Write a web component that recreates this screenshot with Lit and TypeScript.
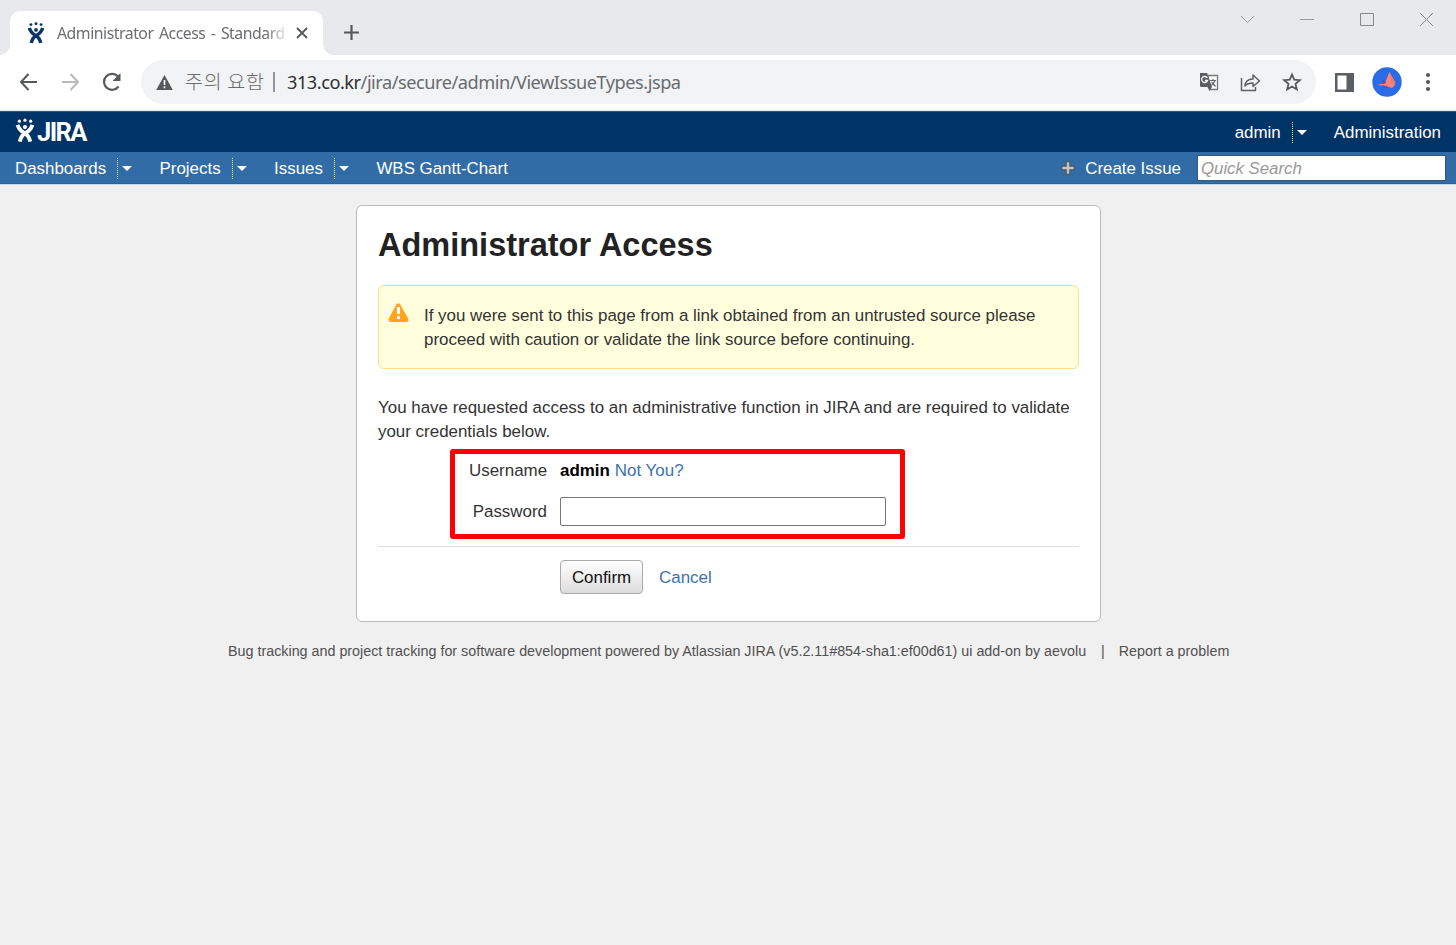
import { LitElement, html, css } from "lit";
import { customElement } from "lit/decorators.js";

const person = html`<svg class="person" viewBox="0 0 18 22" fill="currentColor">
  <circle cx="3.900" cy="2.600" r="1.450"/><circle cx="9" cy="1.700" r="1.450"/><circle cx="14.100" cy="2.600" r="1.450"/>
  <circle cx="9" cy="7.900" r="1.900"/>
  <path d="M2.300 6C3.600 9.800 6 12.200 9 13.700c2.800 1.500 4 4 4.700 7.300M15.700 6C14.400 9.800 12 12.200 9 13.700 6.200 15.200 5 17.700 4.300 21" fill="none" stroke="currentColor" stroke-width="3.500"/>
</svg>`;

@customElement("app-root")
export class AppRoot extends LitElement {
  static styles = css`
    :host { display: block; width: 1456px; height: 945px; overflow: hidden; background: #f0f0f0; font: 16.93px/24px "Liberation Sans", Arial, sans-serif; color: #333; }
    * { box-sizing: border-box; }
    svg { display: block; flex: none; }
    .strip { height: 55px; background: #e8e9ed; display: flex; align-items: flex-end; }
    .corner { width: 10px; height: 10px; background: radial-gradient(circle at 0 0, #e8e9ed 9.5px, #fff 10px); }
    .corner-end { background: radial-gradient(circle at 100% 0, #e8e9ed 9.5px, #fff 10px); }
    .tab { width: 313px; height: 44px; background: #fff; border-radius: 10px 10px 0 0; display: flex; align-items: center; padding-left: 17px; }
    .tab .person { width: 18px; height: 22px; color: #0b3467; }
    .title { width: 230px; margin-left: 12px; white-space: nowrap; font: 15.8px/24px "Noto Sans", sans-serif; letter-spacing: -.47px; word-spacing: 1.8px; color: #6b6d70; -webkit-mask-image: linear-gradient(90deg, #000 208px, transparent 233px); mask-image: linear-gradient(90deg, #000 208px, transparent 233px); }
    .close { margin-left: 9px; }
    .plus { margin: 0 0 14px 10px; }
    .window { margin-left: auto; height: 55px; display: flex; gap: 44px; padding: 11px 21px 0 0; }
    .toolbar { height: 56px; background: #fff; display: flex; align-items: center; padding: 0 0 1px 18px; border-bottom: 1px solid #e2e2e2; }
    .reload { margin-left: 20px; }
    .fwd { margin-left: 20px; }
    .omni { margin-left: 18px; width: 1175px; height: 44px; border-radius: 22px; background: #f1f3f4; display: flex; align-items: center; padding: 0 14px 0 15px; color: #696b6f; font: 18.2px/26px "Noto Sans", sans-serif; white-space: nowrap; }
    .caution { width: 80px; margin: -2px 0 0 12px; font: 300 19.5px/26px "Noto Sans CJK KR", sans-serif; letter-spacing: .7px; }
    .bar { width: 2px; height: 20px; background: #929497; margin: 0 12px 0 8px; }
    .url { letter-spacing: -.48px; }
    .host { color: #2d2e31; }
    .actions { display: flex; gap: 21px; margin-left: auto; }
    .panel { margin-left: 19px; }
    .avatar { margin-left: 18px; }
    .dots { margin-left: 23px; }
    .header { height: 41px; background: #036; border-top: 1px solid #345778; color: #fff; display: flex; align-items: center; padding: 1px 15px 0; }
    .logo { display: flex; align-items: center; margin-top: -4px; }
    .logo .person { width: 20px; height: 27px; }
    .wordmark { width: 51px; margin-left: 2px; font: bold 25.5px/28px Roboto, sans-serif; letter-spacing: -1.6px; padding-top: 3px; }
    .split { display: flex; align-items: center; }
    .split::after { content: ""; border: 5px solid transparent; border-top-color: #fff; border-bottom: 0; margin-left: 4px; }
    .sep { height: 21px; border-left: 1px dotted #dfe8f1; margin-left: 11px; }
    .header .split { margin-left: auto; }
    .admin { margin-left: 27px; }
    .nav { height: 32px; background: #326ca6; border-bottom: 1px solid #2560a0; color: #fff; display: flex; align-items: center; padding: 2px 10px 0 15px; white-space: nowrap; font-size: 16.9px; }
    .nav .split { margin-right: 27.5px; }
    .create { display: flex; align-items: center; gap: 10px; margin-left: auto; }
    .create svg { margin-top: -2px; }
    .search { width: 249px; height: 26px; margin: -1px 0 0 16px; border: 1px solid #36587b; background: #fff; color: #999; font-size: 16.8px; font-style: italic; line-height: 25px; padding-left: 3px; }
    .light { height: 1px; background: #c7d8e8; }
    .card { width: 745px; height: 417px; margin: 20px auto 0 356px; background: #fff; border: 1px solid #bbb; border-radius: 6px; padding: 20px 21px 0; }
    h1 { margin: 0; font: bold 32.5px/39px "Liberation Sans", sans-serif; color: #222; white-space: nowrap; }
    .warn { height: 84px; margin-top: 20px; border: 1px solid #fbdd8c; border-radius: 6px; background: #ffffdd; padding: 18px 0 0 10px; display: flex; white-space: nowrap; }
    .warn svg { margin: -1px 15px 0 -1px; }
    .para { margin-top: 27px; white-space: nowrap; }
    .mark { width: 455px; height: 90px; margin: 5px 0 0 72px; border: 5px solid #f00; border-radius: 3px; padding: 5px 0 0 14px; }
    .row { display: grid; grid-template-columns: 78px auto; column-gap: 13px; align-items: center; }
    .label { text-align: right; }
    .user { color: #000; }
    .user b { margin-right: 5px; }
    .pw { margin-top: 14px; }
    .input { width: 326px; height: 29px; border: 1px solid #767676; border-radius: 2px; background: #fff; }
    .link { color: #3b73af; }
    .rule { height: 1px; background: #ddd; margin-top: 7px; }
    .buttons { display: flex; align-items: center; margin: 13px 0 0 182px; }
    .buttons .link { padding-top: 2px; }
    .confirm { width: 83px; height: 34px; border: 1px solid #aaa; border-radius: 4px; background: linear-gradient(#fff, #ddd); color: #111; text-align: center; line-height: 33px; margin-right: 16px; }
    .footer { margin: 17px 0 0 228px; display: flex; font-size: 14.32px; color: #505050; white-space: nowrap; }
    .powered { width: 859px; }
    .pipe { margin: 0 14px; }
  `;
  menu(label: string) {
    return html`<div class="split"><span>${label}</span><span class="sep"></span></div>`;
  }
  render() {
    return html`
    <div class="strip"><i class="corner"></i>
      <div class="tab">${person}<div class="title">Administrator Access - Standard</div>
        <svg class="close" width="12" height="12" viewBox="0 0 12 12" stroke="#55585c" stroke-width="1.800"><path d="m1 1 10 10M11 1 1 11"/></svg></div>
      <i class="corner corner-end"></i>
      <svg class="plus" width="17" height="17" viewBox="0 0 17 17" stroke="#55585c" stroke-width="2.200"><path d="M8.500 1v15M1 8.500h15"/></svg>
      <div class="window">
        <svg width="16" height="16" fill="none" stroke="#999"><path d="m2 5 6.500 6.500L15 5"/></svg>
        <svg width="16" height="16" stroke="#999"><path d="M1 8.500h14"/></svg>
        <svg width="16" height="16" fill="none" stroke="#888"><path d="M1.500 2.500h13v12h-13z"/></svg>
        <svg width="16" height="16" stroke="#888"><path d="m1 2 13 13M14 2 1 15"/></svg>
      </div></div>
    <div class="toolbar">
      <svg width="21" height="20" viewBox="0 0 21 20" fill="none" stroke="#55585c" stroke-width="2"><path d="M19 10H3M10.500 2 3 10l7.500 8"/></svg>
      <svg class="fwd" width="21" height="20" viewBox="0 0 21 20" fill="none" stroke="#b8babc" stroke-width="2"><path d="M3 10h16M11.500 2 19 10l-7.500 8"/></svg>
      <svg class="reload" width="23" height="22" viewBox="0 0 23 22" fill="none" stroke="#55585c" stroke-width="2.200"><path d="M18.500 15.500a8 8 0 1 1-.5-10"/><path d="M20.500 2v8h-8z" fill="#55585c" stroke="none"/></svg>
      <div class="omni">
        <svg width="17" height="15" viewBox="0 0 17 15"><path d="m8.500 0 8.300 15H.2z" fill="#55585c"/><path d="M8.500 5v5M8.500 11.300v2" stroke="#f1f3f4" stroke-width="1.700"/></svg>
        <span class="caution">주의 요함</span><span class="bar"></span><span class="url"><span class="host">313.co.kr</span>/jira/secure/admin/ViewIssueTypes.jspa</span>
        <div class="actions">
          <svg width="20" height="20" viewBox="0 0 20 20"><path d="M9 3.500h9.500v14H11z" fill="#fafafa" stroke="#777a7e" stroke-width="1.300"/><path d="M1 1h7l5 14H2.500Q1 15 1 13.500z" fill="#5a5d61"/><path d="m8.500 15 2 4 2.500-4" fill="#5a5d61"/><path d="M8.300 6A3 3 0 1 0 8.500 8.500H6" fill="none" stroke="#fff" stroke-width="1.300"/><path d="M11 8.500h6M14 7v1.500M16 8.500q-1 3-3.500 5M12.500 10l4 4.500" fill="none" stroke="#66696d" stroke-width="1.200"/></svg>
          <svg width="21" height="20" viewBox="0 0 21 20" fill="none" stroke="#5d6064" stroke-width="1.500" stroke-linejoin="round"><path d="M1.500 6v12.500h14V15"/><path d="M5 14c.3-4.500 3-7 8-7V3l6.500 6-6.500 5.500V11c-3.500 0-6 .8-8 3z"/></svg>
          <svg width="20" height="20" viewBox="0 0 20 20" fill="none" stroke="#55585c" stroke-width="1.800"><path d="m10 2.500 2.200 5.200 5.600.5-4.300 3.700 1.300 5.500-4.800-2.900-4.800 2.900 1.300-5.500L2.200 8.200l5.600-.5z"/></svg>
        </div>
      </div>
      <svg class="panel" width="19" height="19"><path d="M0 0h19v19H0z" fill="#5b5e64"/><path d="M2.500 2.500h9v14h-9z" fill="#fff"/></svg>
      <svg class="avatar" width="30" height="30" viewBox="0 0 30 30"><circle cx="15" cy="15" r="14.700" fill="#2a6be8"/><path d="m17.500 5 6 10.500-4 4.500-6-5z" fill="#f5796e"/><path d="m5 18 8.500-2 4-11 1.500 10 4.500 2-3.500 4-5.500-2z" fill="#ff8479"/><path d="m11 12.500 3 3.500-4 1zM10 18l6 3-5-.5z" fill="#893b72"/></svg>
      <svg class="dots" width="6" height="20" fill="#55585c"><circle cx="3" cy="3" r="2.100"/><circle cx="3" cy="10" r="2.100"/><circle cx="3" cy="17" r="2.100"/></svg>
    </div>
    <div class="header"><div class="logo">${person}<span class="wordmark">JIRA</span></div>${this.menu("admin")}<span class="admin">Administration</span></div>
    <div class="nav">${this.menu("Dashboards")}${this.menu("Projects")}${this.menu("Issues")}<span>WBS Gantt-Chart</span>
      <div class="create"><svg width="14" height="14"><path d="M4.500 0h5v4.500H14v5H9.500V14h-5V9.500H0v-5h4.500z" fill="#4b5660"/><path d="M5.800 1.300h2.400v4.500h4.500v2.400H8.200v4.500H5.800V8.200H1.300V5.800h4.500z" fill="#c4c4c4"/></svg><span>Create Issue</span></div><div class="search">Quick Search</div></div>
    <div class="light"></div>
    <div class="card"><h1>Administrator Access</h1>
      <div class="warn"><svg width="21" height="19" viewBox="0 0 21 19"><path d="M8.300 1.500q2-2.500 4 0l7.900 14q1.200 3.300-1.700 3.500h-16Q-.5 18.500.8 15.500z" fill="#ffa51f"/><path d="M9 4h3v7H9zM9 13.200h3V16H9z" fill="#fff"/></svg>
        <div>If you were sent to this page from a link obtained from an untrusted source please<br>proceed with caution or validate the link source before continuing.</div></div>
      <div class="para">You have requested access to an administrative function in JIRA and are required to validate<br>your credentials below.</div>
      <div class="mark"><div class="row"><span class="label">Username</span><span class="user"><b>admin</b><span class="link">Not You?</span></span></div>
        <div class="row pw"><span class="label">Password</span><div class="input"></div></div></div>
      <div class="rule"></div>
      <div class="buttons"><div class="confirm">Confirm</div><span class="link">Cancel</span></div>
    </div>
    <div class="footer"><span class="powered">Bug tracking and project tracking for software development powered by Atlassian JIRA (v5.2.11#854-sha1:ef00d61) ui add-on by aevolu</span><span class="pipe">|</span><span>Report a problem</span></div>`;
  }
}
